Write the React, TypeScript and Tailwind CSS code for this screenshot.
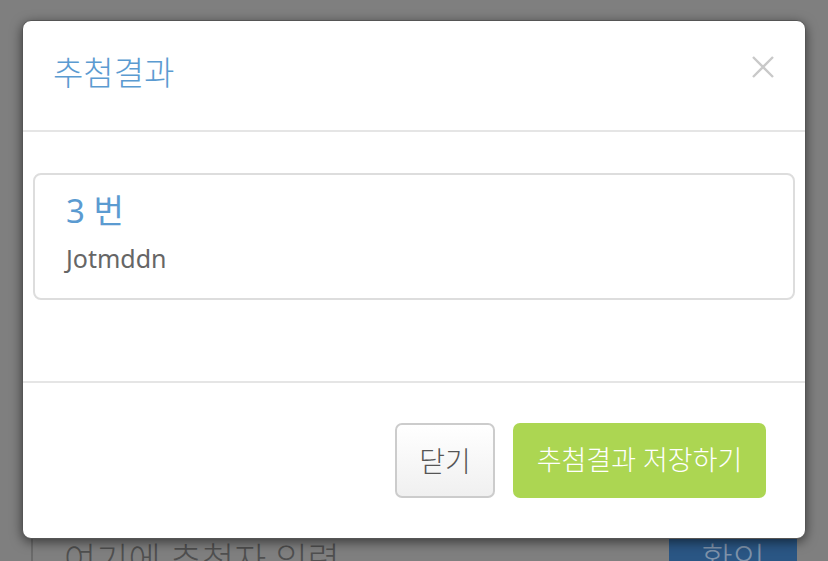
import React from "react";

export default function App() {
  const font = { fontFamily: '"Noto Sans", "Noto Sans CJK KR", sans-serif' };
  return (
    <div className="relative w-[828px] h-[561px] overflow-hidden bg-[#7f7f7f]" style={font}>
      {/* page underneath (dimmed) */}
      <div className="absolute left-[31px] top-[515px] w-[640px] h-[66px] border-2 border-[#6a6a6a] border-r-0 flex items-center pl-[31px]">
        <span className="text-[35px] font-light text-[#4f4f4f] leading-none mt-[22px]">여기에 추첨자 입력</span>
      </div>
      <div className="absolute left-[669px] top-[515px] w-[128px] h-[66px] bg-[#2a5684] flex items-center justify-center">
        <span className="text-[35px] font-light text-[#7f93aa] leading-none mt-[22px]">확인</span>
      </div>

      {/* modal */}
      <div className="absolute left-[22px] top-[20px] w-[784px] h-[519px] bg-white rounded-[9px] shadow-[0_3px_12px_rgba(0,0,0,0.55)] border border-[#555] flex flex-col">
        <div className="h-[111px] border-b-2 border-[#e5e5e5] flex items-start justify-between pl-[30px] pr-[30px] pt-[31px] shrink-0">
          <h4 className="text-[33px] leading-[42px] text-[#5b9bd1] font-light">추첨결과</h4>
          <svg width="24" height="24" viewBox="0 0 24 24" className="mt-[3px]">
            <path d="M2 2 L22 22 M22 2 L2 22" stroke="#c9c9c9" strokeWidth="2.4" fill="none" />
          </svg>
        </div>
        <div className="h-[249px] px-[10px] pt-[41px] shrink-0">
          <div className="h-[127px] border-2 border-[#dddddd] rounded-[8px] pl-[31px] pt-[15px]">
            <div className="text-[33px] leading-[42px] text-[#5b9bd1]">3 번</div>
            <div className="text-[25px] leading-[32px] text-[#666666] mt-[10px]">Jotmddn</div>
          </div>
        </div>
        <div className="border-t-2 border-[#e5e5e5] flex-1 flex justify-end items-start pt-[40px] pr-[39px] gap-[18px]">
          <button className="w-[100px] h-[75px] rounded-[7px] border-2 border-[#cccccc] bg-gradient-to-b from-white to-[#f0f0f0] text-[28px] font-light text-[#555555]">
            닫기
          </button>
          <button className="w-[253px] h-[75px] rounded-[7px] bg-[#acd652] text-[27px] font-light text-white">
            추첨결과 저장하기
          </button>
        </div>
      </div>
    </div>
  );
}
